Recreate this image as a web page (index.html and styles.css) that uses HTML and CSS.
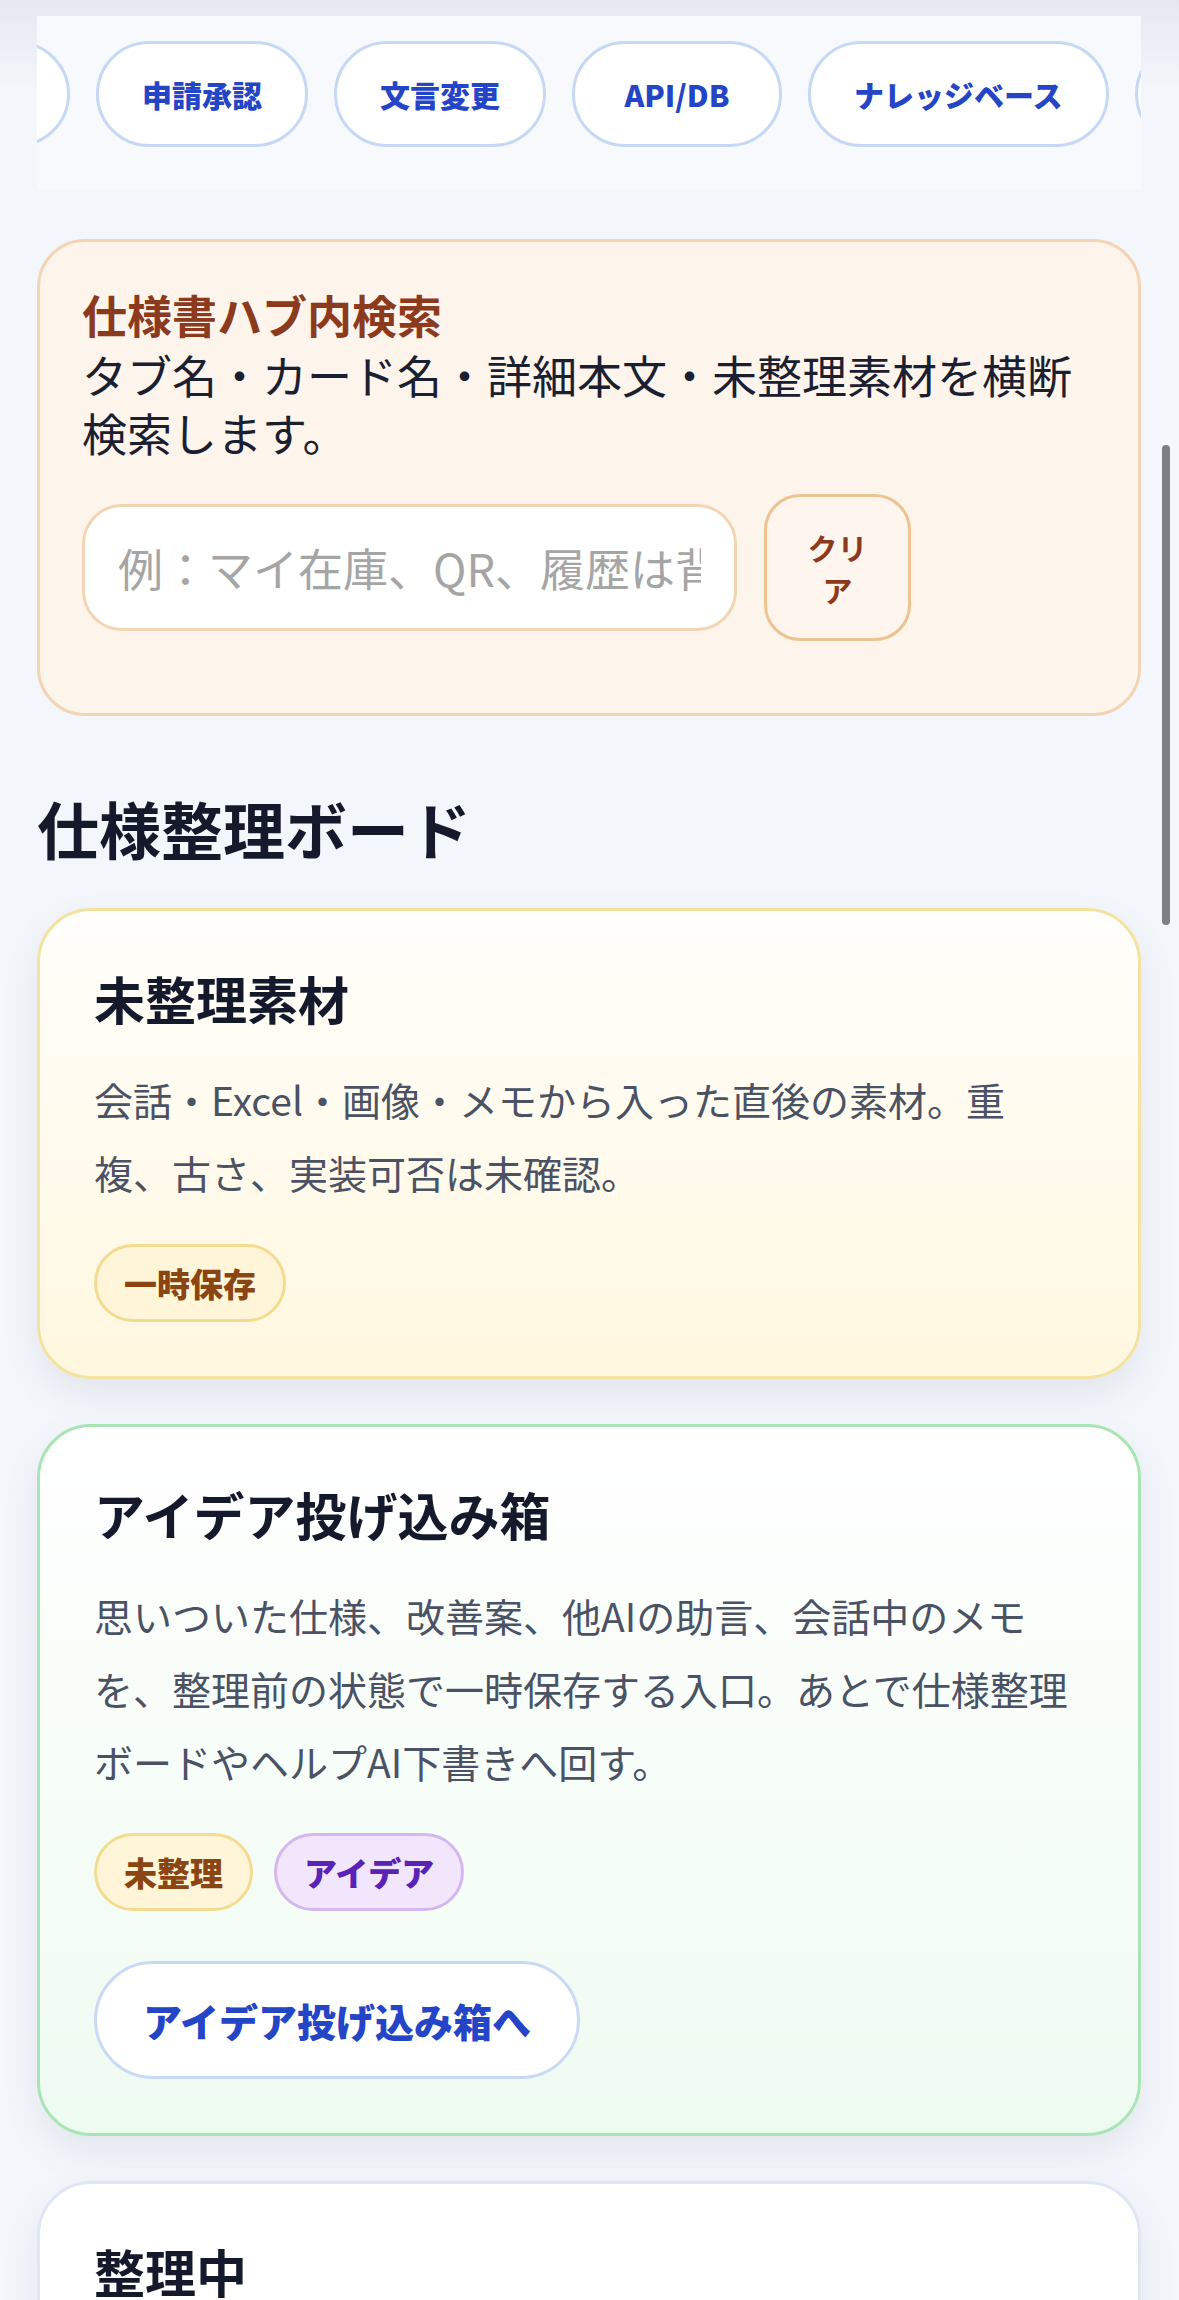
FILE: index.html
```html
<!DOCTYPE html>
<html lang="ja">
<head>
    <meta charset="UTF-8">
    <meta name="viewport" content="width=device-width, initial-scale=1.0">
    <title>仕様書ハブ</title>
    <link rel="stylesheet" href="styles.css">
</head>
<body>
    <div class="page">
        <!-- Category tabs (horizontal scroll) -->
        <nav class="tab-bar">
            <div class="tab-track">
                <a class="tab-pill">画面構成</a>
                <a class="tab-pill">申請承認</a>
                <a class="tab-pill">文言変更</a>
                <a class="tab-pill">API/DB</a>
                <a class="tab-pill">ナレッジベース</a>
                <a class="tab-pill">運用ルール</a>
            </div>
        </nav>

        <!-- Search -->
        <section class="search-card">
            <h2 class="search-title">仕様書ハブ内検索</h2>
            <p class="search-desc">タブ名・カード名・詳細本文・未整理素材を横断検索します。</p>
            <div class="search-row">
                <input type="text" class="search-input" placeholder="例：マイ在庫、QR、履歴は背景色">
                <button type="button" class="clear-btn">クリア</button>
            </div>
        </section>

        <h1 class="board-title">仕様整理ボード</h1>

        <!-- Board columns -->
        <div class="board">
            <article class="board-card card-raw">
                <h3 class="card-title">未整理素材</h3>
                <p class="card-desc">会話・Excel・画像・メモから入った直後の素材。重複、古さ、実装可否は未確認。</p>
                <div class="tag-list">
                    <span class="tag tag-hold">一時保存</span>
                </div>
            </article>

            <article class="board-card card-idea">
                <h3 class="card-title">アイデア投げ込み箱</h3>
                <p class="card-desc">思いついた仕様、改善案、他AIの助言、会話中のメモを、整理前の状態で一時保存する入口。あとで仕様整理ボードやヘルプAI下書きへ回す。</p>
                <div class="tag-list">
                    <span class="tag tag-hold">未整理</span>
                    <span class="tag tag-idea">アイデア</span>
                </div>
                <a class="card-link">アイデア投げ込み箱へ</a>
            </article>

            <article class="board-card">
                <h3 class="card-title">整理中</h3>
                <p class="card-desc">重複を統合し、現行仕様との差分を確認している段階。</p>
            </article>
        </div>
    </div>

    <div class="scroll-thumb"></div>
</body>
</html>
```

FILE: styles.css
```css
* {
    box-sizing: border-box;
}
html {
    scrollbar-width: none;
}
body {
    margin: 0;
    font-family: "Noto Sans CJK JP", "Noto Sans", sans-serif;
    color: #141a2b;
    background: #f3f6fb linear-gradient(#e5e8ee, #f3f6fb 90px) no-repeat;
}
.page {
    padding: 16px 38px 60px 37px;
}

/* tabs */
.tab-bar {
    background: #f7f9fd;
    padding: 25px 0 43px;
    margin-bottom: 49px;
    overflow: hidden;
}
.tab-track {
    display: flex;
    gap: 26px;
    margin-left: -179px;
}
.tab-pill {
    flex: none;
    display: flex;
    align-items: center;
    justify-content: center;
    min-width: 210px;
    height: 106px;
    padding: 0 43px;
    border: 3px solid #c6d8f3;
    border-radius: 53px;
    background: #fff;
    color: #2445c6;
    font-size: 30px;
    font-weight: 900;
}

/* search */
.search-card {
    background: #fdf4ec;
    border: 3px solid #f3d4b4;
    border-radius: 48px;
    padding: 42px 42px 72px;
}
.search-title {
    margin: 0;
    font-size: 45px;
    line-height: 62px;
    font-weight: 700;
    color: #8b3a1d;
}
.search-desc {
    margin: 0;
    font-size: 45px;
    line-height: 58px;
    color: #1a2030;
}
.search-row {
    display: flex;
    align-items: center;
    gap: 27px;
    margin-top: 32px;
}
.search-input {
    width: 655px;
    height: 127px;
    padding: 0 33px;
    border: 3px solid #f2d5b4;
    border-radius: 40px;
    background: #fff;
    font: inherit;
    font-size: 45px;
    outline: none;
}
.search-input::placeholder {
    color: #a5a5a5;
}
.clear-btn {
    width: 147px;
    height: 147px;
    padding: 0 40px;
    border: 3px solid #efc38f;
    border-radius: 36px;
    background: #fdf5ee;
    color: #8b3a1d;
    font: inherit;
    font-size: 30px;
    line-height: 42px;
    font-weight: 700;
}

/* board */
.board-title {
    margin: 72px 0 40px;
    font-size: 62px;
    line-height: 80px;
    font-weight: 700;
}
.board {
    display: flex;
    flex-direction: column;
    gap: 45px;
}
.board-card {
    padding: 54px 66px 54px 54px;
    border: 3px solid #dfe7f5;
    border-radius: 54px;
    background: #fff;
    box-shadow: 0 16px 40px rgba(15, 23, 42, 0.07);
}
.card-raw {
    background: linear-gradient(#fffefb, #fff7df);
    border-color: #f4e2a0;
}
.card-idea {
    background: linear-gradient(#ffffff, #eefbf1);
    border-color: #a9e4b5;
}
.card-title {
    margin: 0;
    font-size: 51px;
    line-height: 66px;
    font-weight: 700;
}
.card-desc {
    margin: 32px 0 0;
    font-size: 39px;
    line-height: 73px;
    color: #4a5264;
}
.tag-list {
    display: flex;
    gap: 21px;
    margin-top: 35px;
}
.tag {
    padding: 13px 27px;
    border: 3px solid;
    border-radius: 40px;
    font-size: 33px;
    line-height: 46px;
    font-weight: 900;
}
.tag-hold {
    background: #fff6da;
    border-color: #f3dc92;
    color: #8a4513;
}
.tag-idea {
    background: #f1e6fc;
    border-color: #d5b7f0;
    color: #5a22b5;
}
.card-link {
    display: inline-block;
    margin-top: 50px;
    padding: 32px 46px;
    border: 3px solid #c9daf5;
    border-radius: 60px;
    background: #fff;
    color: #2445c6;
    font-size: 39px;
    line-height: 48px;
    font-weight: 900;
}

/* overlay scrollbar */
.scroll-thumb {
    position: fixed;
    top: 445px;
    right: 9px;
    width: 8px;
    height: 480px;
    border-radius: 4px;
    background: #7e7f83;
}
```
